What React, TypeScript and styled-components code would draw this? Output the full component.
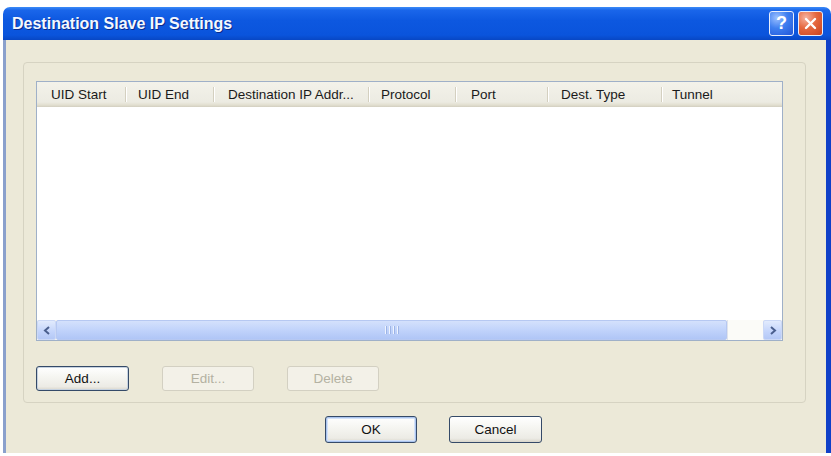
import React from "react";
import styled, { createGlobalStyle } from "styled-components";

const Global = createGlobalStyle`
  html, body { margin: 0; padding: 0; background: #ffffff; }
  body { font-family: "Liberation Sans", Arial, sans-serif; }
  * { box-sizing: border-box; }
`;

const Window = styled.div`
  margin: 7px 0 0 3px;
  width: 828px;
  height: 446px;
  display: flex;
  flex-direction: column;
`;

const TitleBar = styled.div`
  height: 33px;
  flex: none;
  display: flex;
  align-items: center;
  justify-content: space-between;
  padding: 0 8px 0 9px;
  border-radius: 7px 7px 0 0;
  background: linear-gradient(
    to bottom,
    #3c8cf7 0%,
    #1a66ea 10%,
    #0d58e0 40%,
    #0a54dc 85%,
    #0847c4 100%
  );
`;

const Title = styled.div`
  font-family: "Liberation Sans", Arial, sans-serif;
  font-weight: bold;
  font-size: 16px;
  color: #f4f8ff;
  text-shadow: 1px 1px 0 #0a2a8a;
  letter-spacing: 0;
`;

const TitleButtons = styled.div`
  display: flex;
  gap: 4px;
  align-items: center;
`;

const CaptionButton = styled.div<{ $kind: "help" | "close" }>`
  width: 25px;
  height: 25px;
  border-radius: 3px;
  border: 1px solid #e8eefc;
  display: flex;
  align-items: center;
  justify-content: center;
  color: #ffffff;
  font-family: "Liberation Sans", Arial, sans-serif;
  font-weight: bold;
  font-size: 18px;
  background: ${(p) =>
    p.$kind === "help"
      ? "radial-gradient(circle at 30% 25%, #9cc0ff 0%, #3f7ff0 45%, #2156d8 100%)"
      : "radial-gradient(circle at 30% 25%, #f6b3a0 0%, #e5683f 45%, #c8421f 100%)"};
`;

const Body = styled.div`
  flex: 1;
  display: flex;
  flex-direction: column;
  background: #ece9d8;
  border-left: 3px solid #8aa0cc;
  border-right: 5px solid #1040c8;
  padding: 22px 20px 10px 17px;
`;

const GroupBox = styled.div`
  height: 341px;
  border: 1px solid #d6d3c2;
  border-radius: 4px;
  padding: 18px 22px 11px 12px;
  display: flex;
  flex-direction: column;
`;

const ListView = styled.div`
  height: 260px;
  border: 1px solid #9fb0c8;
  background: #ffffff;
  display: flex;
  flex-direction: column;
`;

const Header = styled.div`
  height: 25px;
  flex: none;
  display: flex;
  background: linear-gradient(to bottom, #f3f2ea 0%, #ecebe2 80%, #e2dfd0 92%, #d2cebf 100%);
`;

const HeaderCell = styled.div<{ $w?: number; $pad: number; $sep: boolean }>`
  position: relative;
  ${(p) => (p.$w ? `width: ${p.$w}px; flex: none;` : "flex: 1;")}
  padding-left: ${(p) => p.$pad}px;
  display: flex;
  align-items: center;
  font-size: 13.5px;
  color: #1a1a1a;
  white-space: nowrap;
  ${(p) =>
    p.$sep
      ? `&::after {
    content: "";
    position: absolute;
    right: 0;
    top: 5px;
    bottom: 5px;
    width: 1px;
    background: #d4d0c0;
    box-shadow: 1px 0 0 #ffffff;
  }`
      : ""}
`;

const Rows = styled.div`
  flex: 1;
  background: #ffffff;
`;

const HScroll = styled.div`
  height: 20px;
  flex: none;
  display: flex;
  background: #f6f5f0;
`;

const ScrollButton = styled.div`
  width: 19px;
  flex: none;
  border-radius: 2px;
  border: 1px solid #cbd8f6;
  background: linear-gradient(to bottom, #e2ebfd 0%, #c3d4fb 60%, #b4c8f6 100%);
  display: flex;
  align-items: center;
  justify-content: center;
`;

const Thumb = styled.div<{ $w: number }>`
  width: ${(p) => p.$w}px;
  flex: none;
  border-radius: 2px;
  border: 1px solid #b6c8f2;
  background: linear-gradient(to bottom, #d4e1fc 0%, #c1d3fb 50%, #b0c6f6 100%);
  display: flex;
  align-items: center;
  justify-content: center;
  gap: 2px;
`;

const Grip = styled.div`
  width: 1px;
  height: 8px;
  background: #eef3fe;
  box-shadow: 1px 0 0 #9db4e6;
  margin-right: 1px;
`;

const Track = styled.div`
  flex: 1;
  background: #fbfbf8;
  border-left: 1px solid #dfe3ec;
`;

const ButtonRow = styled.div`
  margin-top: 25px;
  display: flex;
  gap: 33px;
`;

const BottomRow = styled.div`
  margin-top: 13px;
  display: flex;
  gap: 32px;
  padding-left: 302px;
`;

const Button = styled.button<{ $w: number; $h: number; $variant?: "default" | "focus" }>`
  width: ${(p) => p.$w}px;
  height: ${(p) => p.$h}px;
  border: 1px solid #354a68;
  border-radius: 3px;
  background: linear-gradient(to bottom, #ffffff 0%, #f6f6f2 40%, #ecebe5 85%, #d9d6cb 100%);
  font-family: "Liberation Sans", Arial, sans-serif;
  font-size: 13.5px;
  color: #111;
  padding: 0;
  box-shadow: ${(p) =>
    p.$variant === "default"
      ? "inset 0 0 0 1px #aac4ee, inset 0 0 0 2px #d4e2f8"
      : p.$variant === "focus"
      ? "inset 0 0 0 1px #c6d2e0"
      : "none"};
  &:disabled {
    border-color: #d3d0c2;
    background: #f3f1e8;
    color: #b4b1a2;
    box-shadow: none;
  }
`;

const columns = [
  { label: "UID Start", w: 89, pad: 14 },
  { label: "UID End", w: 88, pad: 12 },
  { label: "Destination IP Addr...", w: 155, pad: 14 },
  { label: "Protocol", w: 87, pad: 12 },
  { label: "Port", w: 92, pad: 15 },
  { label: "Dest. Type", w: 114, pad: 13 },
  { label: "Tunnel", w: 0, pad: 10 },
];

const Chevron = ({ dir }: { dir: "left" | "right" }) => (
  <svg width="8" height="9" viewBox="0 0 8 9">
    <path
      d={dir === "left" ? "M6 1 L2 4.5 L6 8" : "M2 1 L6 4.5 L2 8"}
      fill="none"
      stroke="#4a5f8e"
      strokeWidth="2"
    />
  </svg>
);

export default function App() {
  return (
    <>
      <Global />
      <Window>
        <TitleBar>
          <Title>Destination Slave IP Settings</Title>
          <TitleButtons>
            <CaptionButton $kind="help">?</CaptionButton>
            <CaptionButton $kind="close">
              <svg width="13" height="13" viewBox="0 0 13 13">
                <path d="M2 2 L11 11 M11 2 L2 11" stroke="#ffffff" strokeWidth="2.4" strokeLinecap="round" />
              </svg>
            </CaptionButton>
          </TitleButtons>
        </TitleBar>
        <Body>
          <GroupBox>
            <ListView>
              <Header>
                {columns.map((c, i) => (
                  <HeaderCell key={c.label} $w={c.w || undefined} $pad={c.pad} $sep={i < columns.length - 1}>
                    {c.label}
                  </HeaderCell>
                ))}
              </Header>
              <Rows />
              <HScroll>
                <ScrollButton>
                  <Chevron dir="left" />
                </ScrollButton>
                <Thumb $w={671}>
                  <Grip />
                  <Grip />
                  <Grip />
                  <Grip />
                </Thumb>
                <Track />
                <ScrollButton>
                  <Chevron dir="right" />
                </ScrollButton>
              </HScroll>
            </ListView>
            <ButtonRow>
              <Button $w={93} $h={25} $variant="focus">Add...</Button>
              <Button $w={92} $h={25} disabled>Edit...</Button>
              <Button $w={92} $h={25} disabled>Delete</Button>
            </ButtonRow>
          </GroupBox>
          <BottomRow>
            <Button $w={92} $h={27} $variant="default">OK</Button>
            <Button $w={93} $h={27}>Cancel</Button>
          </BottomRow>
        </Body>
      </Window>
    </>
  );
}
